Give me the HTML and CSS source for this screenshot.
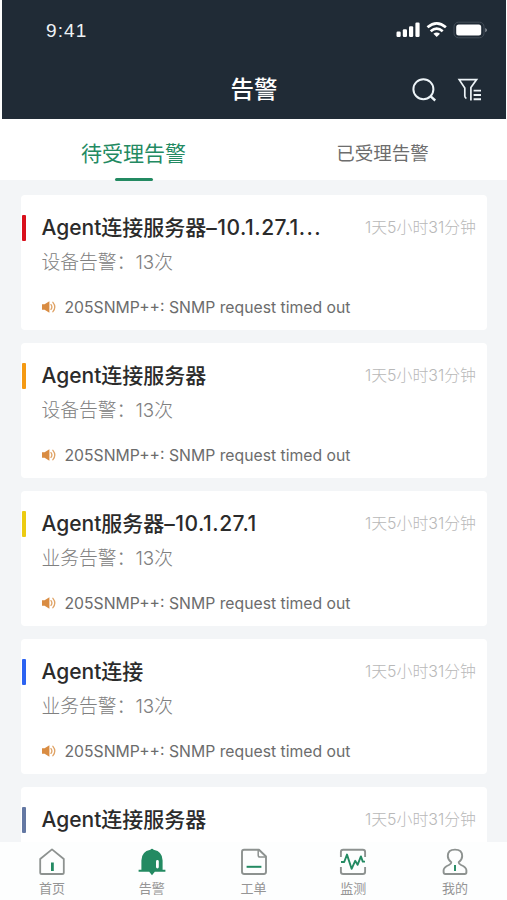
FILE: index.html
```html
<!DOCTYPE html>
<html lang="zh-CN">
<head>
    <meta charset="UTF-8">
    <meta name="viewport" content="width=device-width, initial-scale=1.0">
    <title>告警</title>
    <link rel="stylesheet" href="styles.css">
</head>
<body>

<!-- speaker icon, used by every card -->
<svg class="defs" width="0" height="0">
    <symbol id="speaker" viewBox="0 0 14 12">
        <path d="M0 3.200h2.600L7.400 .2v11.600L2.600 8.800H0z" fill="#d98c42"/>
        <path d="M9 3.600q1.800 2.400 0 4.800M10.900 1.300q3.800 4.700 0 9.400" fill="none" stroke="#dfa264" stroke-width="1.300" stroke-linecap="round"/>
    </symbol>
</svg>

<div class="phone">
    <header class="header">
        <div class="status">
            <span class="clock">9:41</span>
            <svg class="status-icons" width="92" height="18" viewBox="0 0 92 18" fill="#fff">
                <rect x="0.500" y="10.600" width="4.200" height="5.400" rx="1.200"/>
                <rect x="6.800" y="8.300" width="4.200" height="7.700" rx="1.200"/>
                <rect x="13" y="5.200" width="4.200" height="10.800" rx="1.200"/>
                <rect x="19.400" y="1.600" width="4.200" height="14.400" rx="1.200"/>
                <g fill="none" stroke="#fff" stroke-width="2.700">
                    <path d="M31.500 6.300q9.200-8 18.400 0"/>
                    <path d="M34.700 10.200q6-5.200 12 0"/>
                </g>
                <path d="M37.400 12.800q3.300-2.400 6.600 0l-3.300 3.200z"/>
                <rect x="58" y="1.200" width="30" height="15.600" rx="4.500" fill="none" stroke="#434d58" stroke-width="1"/>
                <rect x="60.200" y="3.600" width="25" height="10.800" rx="2.500"/>
                <path d="M89.500 6.900q2.400 2.200 0 4.400z" fill="#b9bfc5"/>
            </svg>
        </div>
        <div class="navbar">
            <h1 class="title">告警</h1>
            <div class="actions">
                <svg width="26" height="26" viewBox="0 0 26 26" fill="none" stroke="#edf4f8" stroke-width="2">
                    <circle cx="12.400" cy="12.200" r="10"/>
                    <path d="M19.400 19.200l4.800 4.300" stroke-width="2.400"/>
                </svg>
                <svg width="26" height="26" viewBox="0 0 26 26" fill="none" stroke="#edf4f8" stroke-width="1.700">
                    <path d="M9.400 21.400q-1.600-.8-1.600-2.400v-8L2.200 2.600h17.400L13.900 10.600v13"/>
                    <path d="M16.600 13.600h7.400M16.600 18h7.400M16.600 22.200h7.400" stroke-width="1.900"/>
                </svg>
            </div>
        </div>
    </header>

    <nav class="tabs">
        <div class="tab active">待受理告警</div>
        <div class="tab">已受理告警</div>
    </nav>

    <main class="list">
        <div class="card red">
            <div class="card-head">
                <h2 class="name">Agent连接服务器<span class="ip">–10.1.27.1</span><span class="more">...</span></h2>
                <span class="time">1天5小时31分钟</span>
            </div>
            <p class="count">设备告警：13次</p>
            <p class="msg"><svg class="speaker"><use href="#speaker"/></svg>205SNMP++: SNMP request timed out</p>
        </div>
        <div class="card orange">
            <div class="card-head">
                <h2 class="name">Agent连接服务器</h2>
                <span class="time">1天5小时31分钟</span>
            </div>
            <p class="count">设备告警：13次</p>
            <p class="msg"><svg class="speaker"><use href="#speaker"/></svg>205SNMP++: SNMP request timed out</p>
        </div>
        <div class="card yellow">
            <div class="card-head">
                <h2 class="name">Agent服务器<span class="ip">–10.1.27.1</span></h2>
                <span class="time">1天5小时31分钟</span>
            </div>
            <p class="count">业务告警：13次</p>
            <p class="msg"><svg class="speaker"><use href="#speaker"/></svg>205SNMP++: SNMP request timed out</p>
        </div>
        <div class="card blue">
            <div class="card-head">
                <h2 class="name">Agent连接</h2>
                <span class="time">1天5小时31分钟</span>
            </div>
            <p class="count">业务告警：13次</p>
            <p class="msg"><svg class="speaker"><use href="#speaker"/></svg>205SNMP++: SNMP request timed out</p>
        </div>
        <div class="card slate">
            <div class="card-head">
                <h2 class="name">Agent连接服务器</h2>
                <span class="time">1天5小时31分钟</span>
            </div>
        </div>
    </main>

    <footer class="tabbar">
        <div class="item">
            <svg width="28" height="28" viewBox="0 0 28 28" fill="none" stroke="#8d9290" stroke-width="1.800" stroke-linejoin="round">
                <path d="M2.200 11L14 1.400 25.800 11v13.400q0 1.600-1.600 1.600H3.800q-1.600 0-1.600-1.600z"/>
                <path d="M14.400 14.500v8.500" stroke="#238a62" stroke-width="2.800"/>
            </svg>
            <span>首页</span>
        </div>
        <div class="item">
            <svg width="28" height="28" viewBox="0 0 28 28" fill="#238a62">
                <path d="M12.400 1.800q1.600-2 3.200 0 9 1.800 9 10.700v9.300h2.800v2H16.800L14 27.300l-2.800-3.500H.6v-2h2.800v-9.300q0-8.900 9-10.700z"/>
                <rect x="18" y="12" width="2.800" height="8.400" rx="1.400" fill="#fff"/>
            </svg>
            <span>告警</span>
        </div>
        <div class="item">
            <svg width="28" height="28" viewBox="0 0 28 28" fill="none" stroke="#8d9290" stroke-width="1.900" stroke-linejoin="round">
                <path d="M4 1.700h15l7 6.800v15.300q0 2.200-2.200 2.200H4.200Q2 26 2 23.800V3.900Q2 1.700 4 1.700z"/>
                <path d="M18.200 1.900v5.400q0 1.800 1.800 1.800h5.600" stroke-width="1.500"/>
                <path d="M6.600 18.800h14.800" stroke="#238a62" stroke-width="2"/>
            </svg>
            <span>工单</span>
        </div>
        <div class="item">
            <svg width="28" height="28" viewBox="0 0 28 28" fill="none" stroke="#8d9290" stroke-width="1.900" stroke-linejoin="round">
                <path d="M1.900 9V4q0-2.300 2.300-2.300h19.600Q26.100 1.700 26.100 4v5M1.900 19v4.700q0 2.300 2.300 2.300h19.600q2.300 0 2.300-2.300V19"/>
                <path d="M2 14h3.200L8 6.600l4.600 14.200 3.600-8 2.400 4 3.300-8.400 1.900 5.200H26" stroke="#238a62"/>
            </svg>
            <span>监测</span>
        </div>
        <div class="item">
            <svg width="28" height="28" viewBox="0 0 28 28" fill="none" stroke="#8d9290" stroke-width="1.900" stroke-linejoin="round">
                <path d="M10.300 14.300Q6.800 11.600 6.800 8q0-6.400 7.200-6.400T21.200 8q0 3.600-3.500 6.300 0 1.700 2.300 2.700 5.400 2.300 5.400 5.300v2q0 1.700-1.700 1.700H4.300q-1.700 0-1.700-1.700v-2q0-3 5.400-5.300 2.300-1 2.300-2.700z"/>
                <path d="M14 17v6" stroke="#238a62"/>
            </svg>
            <span>我的</span>
        </div>
    </footer>
</div>

</body>
</html>
```

FILE: styles.css
```css
* { box-sizing: border-box; }
body { margin: 0; font-family: Inter, "Noto Sans CJK SC", sans-serif; background: #fdfefe; }
h1, h2, p { margin: 0; }
svg { display: block; flex: none; }
.defs { position: absolute; }
.phone { display: flex; flex-direction: column; height: 900px; overflow: hidden; }

/* header */
.header { flex: none; height: 119px; margin: 0 1px 0 2px; background: #202b36; color: #fff; }
.status { display: flex; justify-content: space-between; height: 60px; padding: 21px 18px 0 44px; }
.clock { font-family: "Liberation Sans", Arial, sans-serif; font-size: 19px; line-height: 20px; letter-spacing: 1.1px; color: #eef2f5; }
.navbar { display: grid; grid-template-columns: 1fr auto 1fr; align-items: center; height: 59px; }
.title { grid-column: 2; font-size: 23.5px; font-weight: 500; line-height: 34px; }
.actions { display: flex; justify-content: flex-end; gap: 20px; padding-right: 23px; }

/* tabs */
.tabs { flex: none; display: flex; height: 61px; background: #fff; }
.tab { flex: 1; display: flex; flex-direction: column; align-items: center; padding-top: 21px; font-size: 18.5px; line-height: 26px; color: #6d6d6d; }
.tab:not(.active) { margin-left: -2px; }
.tab.active { padding: 21px 0 0 11px; margin-right: 2px; margin-left: -2px; font-size: 21px; line-height: 28px; color: #238a62; }
.tab.active::after { content: ""; z-index: 1; flex: none; width: 38px; height: 3px; margin-top: 10px; border-radius: 2px; background: #238a62; }

/* alarm cards */
.list { flex: 1; display: flex; flex-direction: column; gap: 13px; min-height: 0; overflow: hidden; padding: 15px 20px 0 21px; background: #f3f5f7; }
.card { flex: none; height: 135px; padding: 20px 11px 0 0; border-radius: 4px; background: #fff; }
.card-head { display: flex; align-items: center; height: 25px; }
.card-head::before { content: ""; flex: none; width: 4.5px; height: 26px; margin: 0 15.5px 0 0.5px; border-radius: 1px; background: var(--level); }
.name { flex: 1; font-size: 21px; font-weight: 500; line-height: 25px; color: #2b2b2b; white-space: nowrap; }
.ip { letter-spacing: 0.5px; }
.more { letter-spacing: 1.4px; }
.time { margin-top: -2px; font-size: 15.9px; font-weight: 300; color: #b8b8b8; white-space: nowrap; }
.count { padding: 9px 0 0 20.5px; font-size: 18.8px; font-weight: 300; line-height: 28px; color: #808080; }
.msg { display: flex; align-items: center; padding: 19px 0 0 20.5px; font-size: 15.75px; line-height: 24px; color: #6c6c6c; white-space: nowrap; }
.speaker { width: 14px; height: 12px; margin: -2px 9px 0 0; }
.red { --level: #d9101c; }
.orange { --level: #f59a13; }
.yellow { --level: #eccb12; }
.blue { --level: #2c63f2; }
.slate { --level: #6478a3; }

/* bottom bar */
.tabbar { flex: none; display: flex; justify-content: space-between; height: 58px; padding: 6px 38px 0 38px; background: #fdfefe; }
.item { display: flex; flex-direction: column; align-items: center; width: 28px; font-size: 13px; line-height: 20px; color: #959595; white-space: nowrap; }
.item:nth-child(2) { margin-right: 2px; }
.item:nth-child(4) { margin-right: 2px; }
.item span { margin-top: 2px; }
```
